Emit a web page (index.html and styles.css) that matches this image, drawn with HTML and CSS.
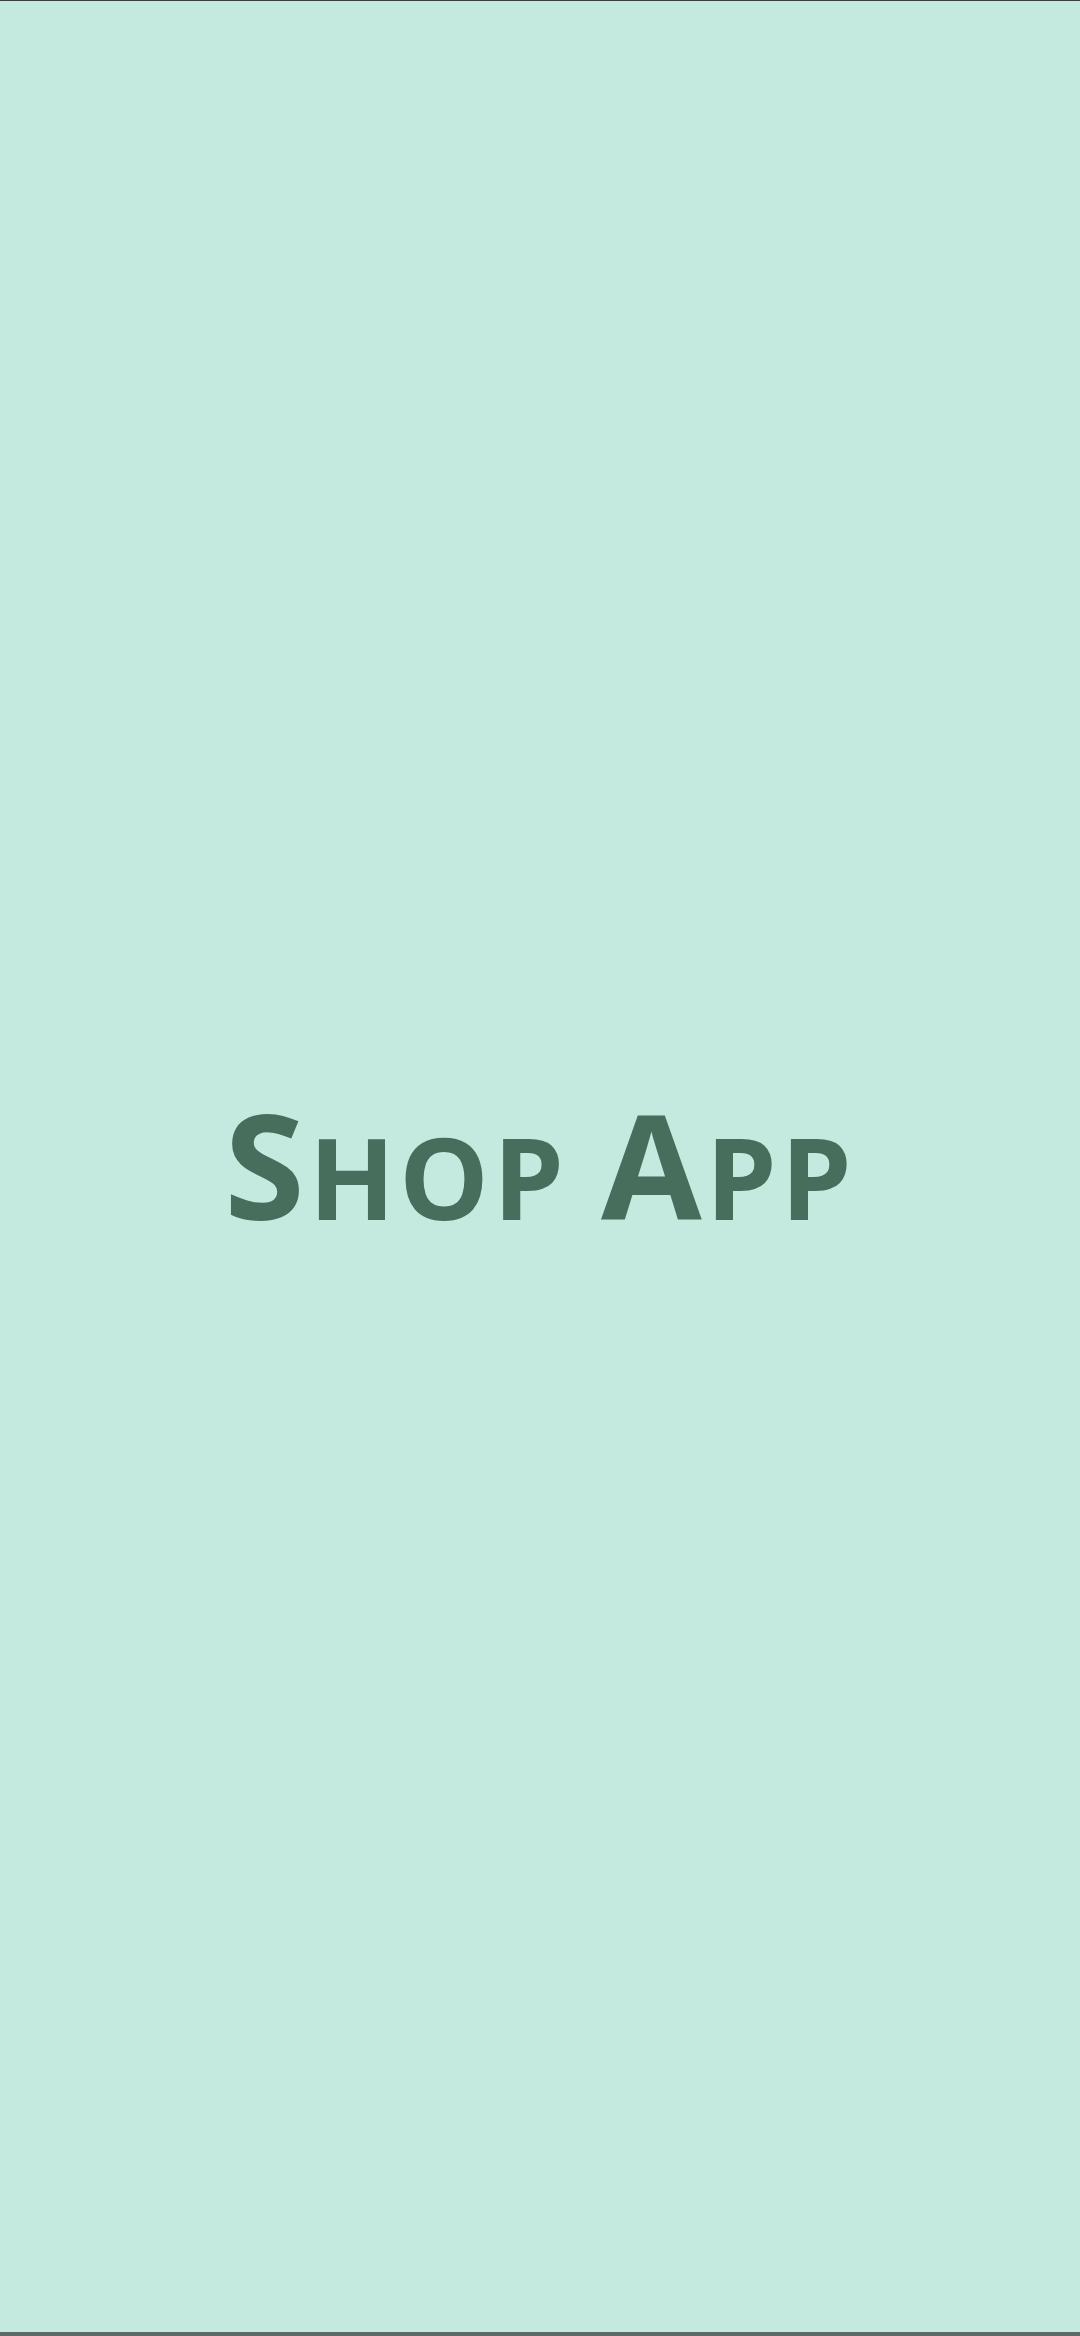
FILE: index.html
```html
<!DOCTYPE html>
<html>
<head>
<meta charset="utf-8">
<link rel="stylesheet" href="styles.css">
</head>
<body>
<div class="screen">
  <h1 class="title"><span class="cap">S</span><span class="sc">HOP</span> <span class="cap">A</span><span class="sc">PP</span></h1>
</div>
</body>
</html>
```
FILE: styles.css
```css
html, body {
  margin: 0;
  padding: 0;
}
body {
  width: 1080px;
  height: 2336px;
  background: #c4e9df;
  overflow: hidden;
}
.screen {
  box-sizing: border-box;
  width: 1080px;
  height: 2336px;
  border-top: 1px solid #3a3f3d;
  border-bottom: 4px solid #5d6b66;
  display: flex;
  align-items: center;
  justify-content: center;
  padding-bottom: 6px;
}
.title {
  margin: 0;
  font-family: "Open Sans", sans-serif;
  font-weight: 700;
  font-size: 112px;
  color: #476e5d;
  line-height: 1;
  letter-spacing: 4px;
  white-space: nowrap;
}
.cap {
  font-size: 146px;
}
.sc {
  font-size: 113px;
}
```
